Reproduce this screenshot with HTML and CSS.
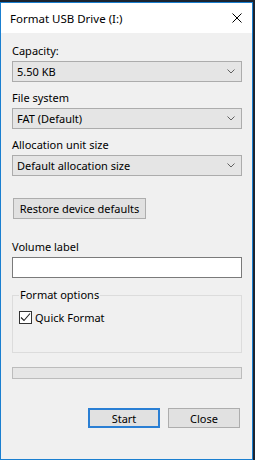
FILE: index.html
```html
<!DOCTYPE html>
<html lang="en">
<head>
    <meta charset="UTF-8">
    <title>Format USB Drive (I:)</title>
    <link rel="stylesheet" href="styles.css">
</head>
<body>
    <div class="window">
        <div class="titlebar">
            <span class="title">Format USB Drive (I:)</span>
            <svg class="close" width="10" height="10" viewBox="0 0 10 10">
                <path d="M0.5 0.5 L9.5 9.5 M9.5 0.5 L0.5 9.5" stroke="#000" stroke-width="1" fill="none"/>
            </svg>
        </div>

        <div class="content">
            <div class="label">Capacity:</div>
            <div class="combo">
                <span>5.50 KB</span>
                <svg class="chev" width="8" height="5" viewBox="0 0 8 5"><path d="M0.5 0.5 L4 4 L7.5 0.5" stroke="#606060" fill="none"/></svg>
            </div>

            <div class="label">File system</div>
            <div class="combo">
                <span>FAT (Default)</span>
                <svg class="chev" width="8" height="5" viewBox="0 0 8 5"><path d="M0.5 0.5 L4 4 L7.5 0.5" stroke="#606060" fill="none"/></svg>
            </div>

            <div class="label">Allocation unit size</div>
            <div class="combo">
                <span>Default allocation size</span>
                <svg class="chev" width="8" height="5" viewBox="0 0 8 5"><path d="M0.5 0.5 L4 4 L7.5 0.5" stroke="#606060" fill="none"/></svg>
            </div>

            <button class="btn restore">Restore device defaults</button>

            <div class="label">Volume label</div>
            <div class="textbox"></div>

            <fieldset class="group">
                <legend>Format options</legend>
                <label class="check">
                    <span class="box">
                        <svg width="11" height="11" viewBox="0 0 11 11"><path d="M1 5.5 L4 8.5 L10 1.5" stroke="#222" stroke-width="1.1" fill="none"/></svg>
                    </span>
                    Quick Format
                </label>
            </fieldset>

            <div class="progress"></div>

            <div class="actions">
                <button class="btn primary">Start</button>
                <button class="btn">Close</button>
            </div>
        </div>
    </div>
</body>
</html>
```

FILE: styles.css
```css
* {
    margin: 0;
    padding: 0;
    box-sizing: border-box;
}

body {
    background: #1c2430;
    font-family: "Noto Sans", "Open Sans", sans-serif;
    font-size: 11px;
    color: #000;
    height: 460px;
    overflow: hidden;
}

.window {
    margin-top: 2px;
    width: 253px;
    height: 458px;
    border: 1px solid #1a7fd0;
    background: #f0f0f0;
}

.titlebar {
    height: 30px;
    background: #fff;
    display: flex;
    align-items: center;
    justify-content: space-between;
    padding: 0 10px 0 9px;
}

.title {
    font-size: 11.5px;
}

.content {
    padding: 10px 10px 0 11px;
}

.label {
    height: 15px;
    line-height: 15px;
    margin-bottom: 3px;
}

.combo {
    height: 21px;
    background: #e5e5e5;
    border: 1px solid #acacac;
    display: flex;
    align-items: center;
    justify-content: space-between;
    padding: 0 6px 0 4px;
    margin-bottom: 8px;
}

.chev {
    display: block;
}

.btn {
    font-family: inherit;
    font-size: 11px;
    color: #000;
    background: #e1e1e1;
    border: 1px solid #adadad;
    height: 21px;
}

.restore {
    width: 133px;
    margin: 22px 0 20px 1px;
    display: block;
}

.textbox {
    height: 21px;
    background: #fff;
    border: 1px solid #7a7a7a;
    margin-bottom: 10px;
}

.group {
    border: 1px solid #dcdcdc;
    height: 65px;
    padding: 8px 6px 0;
}

.group legend {
    padding: 0 1px;
    line-height: 14px;
}

.check {
    display: flex;
    align-items: center;
    gap: 3px;
}

.box {
    width: 13px;
    height: 13px;
    border: 1px solid #333;
    background: #fff;
    display: flex;
    align-items: center;
    justify-content: center;
}

.box svg {
    display: block;
}

.progress {
    margin-top: 14px;
    height: 12px;
    background: #e6e6e6;
    border: 1px solid #bcbcbc;
}

.actions {
    display: flex;
    justify-content: flex-end;
    gap: 8px;
    margin-top: 29px;
    padding-right: 2px;
}

.actions .btn {
    width: 72px;
    height: 20px;
}

.btn.primary {
    border: 2px solid #2a7fd4;
}
```
